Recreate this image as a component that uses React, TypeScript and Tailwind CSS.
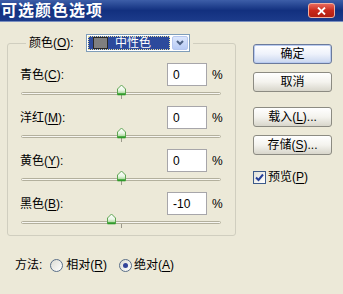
import React from 'react';

const FONT = '"Liberation Sans", "Noto Sans CJK SC", sans-serif';

interface ColorRow {
  label: string;
  hotkey: string;
  value: number;
}

const ROWS: ColorRow[] = [
  { label: '青色', hotkey: 'C', value: 0 },
  { label: '洋红', hotkey: 'M', value: 0 },
  { label: '黄色', hotkey: 'Y', value: 0 },
  { label: '黑色', hotkey: 'B', value: -10 },
];

const Hot = ({ text, k, suffix = '' }: { text: string; k: string; suffix?: string }) => (
  <span>
    {text}(<span className="underline underline-offset-2">{k}</span>){suffix}
  </span>
);

const Thumb = () => (
  <svg width="11" height="12" viewBox="0 0 11 12">
    <defs>
      <linearGradient id="thumbFill" x1="0" y1="0" x2="0" y2="1">
        <stop offset="0" stopColor="#ffffff" />
        <stop offset="0.55" stopColor="#eaf5e6" />
        <stop offset="1" stopColor="#8fcf7c" />
      </linearGradient>
    </defs>
    <path d="M1.5 5 L5.5 1 L9.5 5 L9.5 10.5 L1.5 10.5 Z" fill="url(#thumbFill)" stroke="#5ea552" strokeWidth="1" />
    <path d="M1.5 10.3 L9.5 10.3" stroke="#2f9a2a" strokeWidth="2" />
  </svg>
);

const Slider = ({ value }: { value: number }) => (
  <div className="relative h-[20px] pt-[6px] ml-[1px] w-[200px]">
    <div className="h-[3px] rounded-full border border-[#b3b09d] bg-[#f7f6f1]" />
    <div className="absolute left-[100px] top-[9px] w-px h-[4px] bg-[#9c9a8c]" />
    <div className="absolute top-[-2px]" style={{ left: 100 + value - 5 }}>
      <Thumb />
    </div>
  </div>
);

const XpButton = ({ children, primary = false }: { children: React.ReactNode; primary?: boolean }) => (
  <div
    className={`w-[79px] h-[20px] rounded-[3px] border flex items-center justify-center text-[12px] text-black ${
      primary
        ? 'border-[#6b7a9c] bg-gradient-to-b from-[#ffffff] via-[#eef2fb] to-[#c9d6ef] shadow-[inset_0_0_0_1px_#b9cbf0]'
        : 'border-[#8c8b82] bg-gradient-to-b from-[#ffffff] via-[#f4f3ee] to-[#d8d6cb]'
    }`}
  >
    {children}
  </div>
);

const Radio = ({ checked }: { checked?: boolean }) => (
  <div className="w-[13px] h-[13px] rounded-full border border-[#5a6f88] bg-gradient-to-br from-[#dcdcd4] to-white flex items-center justify-center">
    {checked && <div className="w-[5px] h-[5px] rounded-full bg-[#33449a]" />}
  </div>
);

export default function App() {
  return (
    <div className="w-[343px] h-[294px] bg-[#ece9d8] overflow-hidden text-black" style={{ fontFamily: FONT }}>
      {/* Title bar */}
      <div className="h-[22px] flex items-center justify-between bg-gradient-to-b from-[#3d5ea8] via-[#12307f] to-[#1c3b8b] border-b border-[#7a8fbf]">
        <span className="pl-[1px] text-[16px] font-bold text-white leading-none tracking-[1px]">可选颜色选项</span>
        <div className="mr-[8px] w-[27px] h-[15px] rounded-[3px] border border-[#f0b0a0] bg-gradient-to-b from-[#e8665a] via-[#c9281a] to-[#b21f10] flex items-center justify-center">
          <svg width="9" height="8" viewBox="0 0 9 8">
            <path d="M1 0.5 L8 7.5 M8 0.5 L1 7.5" stroke="#ffffff" strokeWidth="1.8" />
          </svg>
        </div>
      </div>

      <div className="flex">
        {/* Left column */}
        <div className="w-[236px]">
          <fieldset className="ml-[7px] mt-[12px] w-[229px] border border-[#d0cebf] rounded-[3px] px-[12px] pt-[11px] pb-0">
            <legend className="ml-[6px] px-[3px]">
              <div className="flex items-center text-[12px]">
                <div className="w-[57px]">
                  <Hot text="颜色" k="O" suffix=":" />
                </div>
                <div className="w-[104px] h-[18px] border border-[#7f9db9] bg-white p-[1px] flex">
                  <div className="flex-1 flex items-center bg-[#2c4a9c] outline outline-1 outline-dotted outline-[#e8e0a0] -outline-offset-1">
                    <div className="ml-[5px] w-[15px] h-[12px] bg-[#7f7f7f] border border-[#2a2a2a]" />
                    <span className="ml-[7px] text-white leading-none">中性色</span>
                  </div>
                  <div className="ml-[2px] w-[16px] rounded-[2px] border border-[#b6c7ef] bg-gradient-to-b from-[#dce6fc] to-[#b8cbf5] flex items-center justify-center">
                    <svg width="8" height="6" viewBox="0 0 8 6">
                      <path d="M1 1 L4 4 L7 1" fill="none" stroke="#4d6185" strokeWidth="2" />
                    </svg>
                  </div>
                </div>
              </div>
            </legend>

            {ROWS.map((row) => (
              <div key={row.hotkey}>
                <div className="flex items-center h-[23px] text-[12px]">
                  <div className="w-[147px]">
                    <Hot text={row.label} k={row.hotkey} suffix=":" />
                  </div>
                  <div className="w-[40px] h-[23px] border border-[#a7a6aa] bg-white flex items-center pl-[5px]">
                    {row.value}
                  </div>
                  <span className="ml-[5px]">%</span>
                </div>
                <Slider value={row.value} />
              </div>
            ))}
          </fieldset>

          <div className="mt-[21px] ml-[15px] flex items-center h-[16px] text-[12px]">
            <span>方法:</span>
            <div className="ml-[8px]">
              <Radio />
            </div>
            <span className="ml-[3px]">
              <Hot text="相对" k="R" />
            </span>
            <div className="ml-[12px]">
              <Radio checked />
            </div>
            <span className="ml-[2px]">
              <Hot text="绝对" k="A" />
            </span>
          </div>
        </div>

        {/* Right column */}
        <div className="ml-[17px] mt-[22px] flex flex-col">
          <XpButton primary>确定</XpButton>
          <div className="mt-[8px]">
            <XpButton>取消</XpButton>
          </div>
          <div className="mt-[15px]">
            <XpButton>
              <Hot text="载入" k="L" suffix="..." />
            </XpButton>
          </div>
          <div className="mt-[8px]">
            <XpButton>
              <Hot text="存储" k="S" suffix="..." />
            </XpButton>
          </div>
          <div className="mt-[13px] flex items-center text-[12px]">
            <div className="w-[13px] h-[13px] border border-[#3c5a8a] bg-gradient-to-br from-[#e0e0d8] to-white flex items-center justify-center">
              <svg width="9" height="9" viewBox="0 0 9 9">
                <path d="M1 4.5 L3.5 7 L8 1.5" fill="none" stroke="#25409a" strokeWidth="2" />
              </svg>
            </div>
            <span className="ml-[2px]">
              <Hot text="预览" k="P" />
            </span>
          </div>
        </div>
      </div>
    </div>
  );
}
